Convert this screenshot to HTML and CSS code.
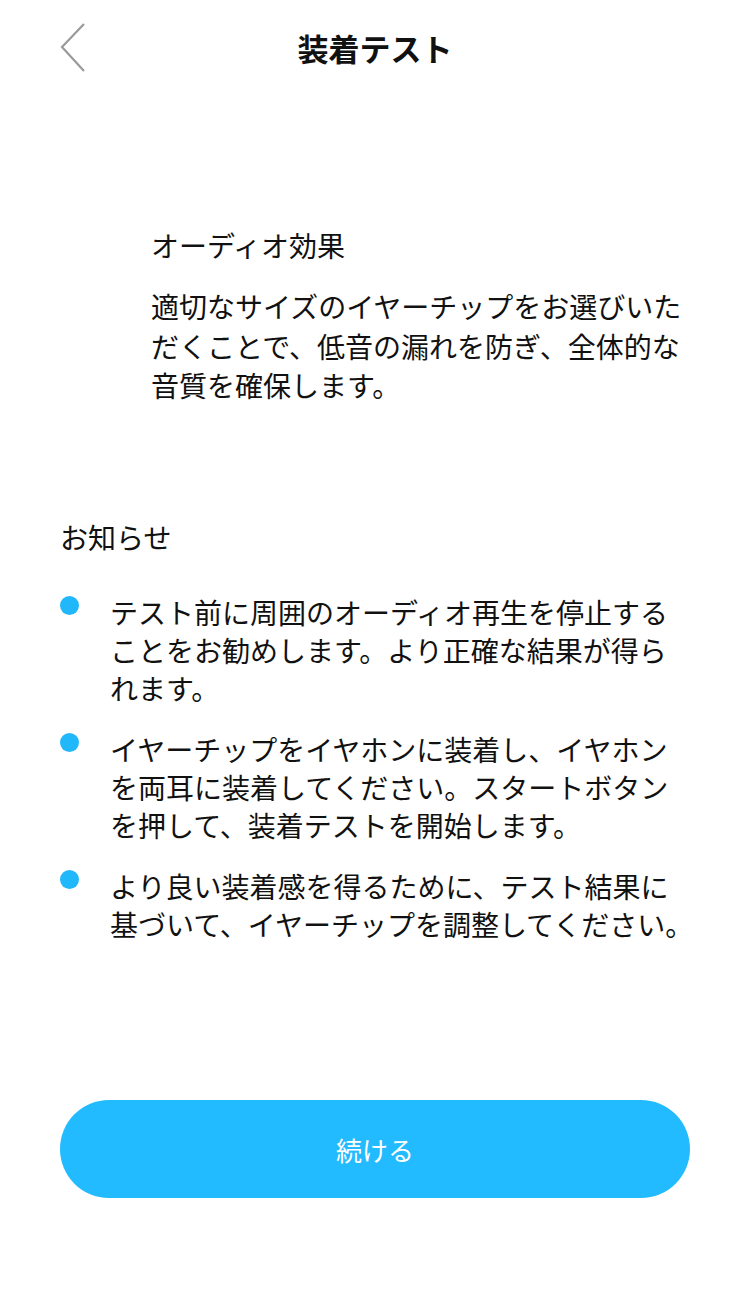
FILE: index.html
```html
<!DOCTYPE html>
<html lang="ja">
<head>
<meta charset="utf-8">
<title>装着テスト</title>
<link rel="stylesheet" href="styles.css">
</head>
<body>
<div class="page">
  <header class="topbar">
    <button class="back" aria-label="戻る">
      <svg width="28" height="50" viewBox="0 0 28 50"><polyline points="24,1 2,24 24,48" fill="none" stroke="#9a9a9a" stroke-width="2.2"/></svg>
    </button>
    <h1 class="title">装着テスト</h1>
    <span class="spacer"></span>
  </header>

  <section class="intro">
    <h2 class="intro-title">オーディオ効果</h2>
    <p class="intro-text">適切なサイズのイヤーチップをお選びいただくことで、低音の漏れを防ぎ、全体的な音質を確保します。</p>
  </section>

  <section class="notice">
    <h2 class="notice-title">お知らせ</h2>
    <ul class="notice-list">
      <li class="notice-item"><span class="dot"></span><span class="notice-text">テスト前に周囲のオーディオ再生を停止することをお勧めします。より正確な結果が得られます。</span></li>
      <li class="notice-item"><span class="dot"></span><span class="notice-text">イヤーチップをイヤホンに装着し、イヤホンを両耳に装着してください。スタートボタンを押して、装着テストを開始します。</span></li>
      <li class="notice-item"><span class="dot"></span><span class="notice-text">より良い装着感を得るために、テスト結果に基づいて、イヤーチップを調整してください<span class="hang">。</span></span></li>
    </ul>
  </section>

  <div class="actions">
    <button class="primary">続ける</button>
  </div>
</div>
</body>
</html>
```

FILE: styles.css
```css
* { box-sizing: border-box; }
html, body { margin: 0; padding: 0; background: #fff; }
body {
  font-family: "Noto Sans CJK JP", "Noto Sans", sans-serif;
  color: #111;
}
.page {
  min-height: 1299px;
  display: flex;
  flex-direction: column;
  padding: 0 60px;
}
.topbar {
  height: 96px;
  display: grid;
  grid-template-columns: 1fr auto 1fr;
  align-items: center;
}
.back {
  justify-self: start;
  background: none;
  border: 0;
  padding: 0;
  margin: 0;
  display: flex;
  align-items: center;
  height: 50px;
}
.title {
  margin: 0;
  font-size: 31px;
  font-weight: 700;
  line-height: 40px;
}
.intro {
  margin-top: 129px;
  padding-left: 91px;
}
.intro-title {
  margin: 0;
  font-size: 28px;
  font-weight: 400;
  line-height: 40px;
}
.intro-text {
  margin: 22px 0 0;
  font-size: 28px;
  line-height: 39.5px;
}
.notice {
  margin-top: 111px;
}
.notice-title {
  margin: 0;
  font-size: 28px;
  font-weight: 400;
  line-height: 40px;
}
.notice-list {
  list-style: none;
  margin: 36px 0 0;
  padding: 0;
  display: flex;
  flex-direction: column;
  gap: 23px;
}
.notice-item {
  display: flex;
  align-items: flex-start;
  gap: 31px;
}
.dot {
  flex: none;
  width: 19px;
  height: 19px;
  border-radius: 50%;
  background: #21b7fb;
  margin-top: 3px;
}
.notice-text {
  flex: 1;
  font-size: 28px;
  line-height: 38px;
}
.hang {
  font-feature-settings: "halt" 1;
}
.actions {
  margin-top: auto;
  margin-bottom: 101px;
}
.primary {
  display: block;
  width: 100%;
  height: 98px;
  border: 0;
  border-radius: 49px;
  background: #22bbff;
  color: #fff;
  font-family: "Noto Sans CJK JP", "Noto Sans", sans-serif;
  font-size: 26px;
  font-weight: 400;
}
```
